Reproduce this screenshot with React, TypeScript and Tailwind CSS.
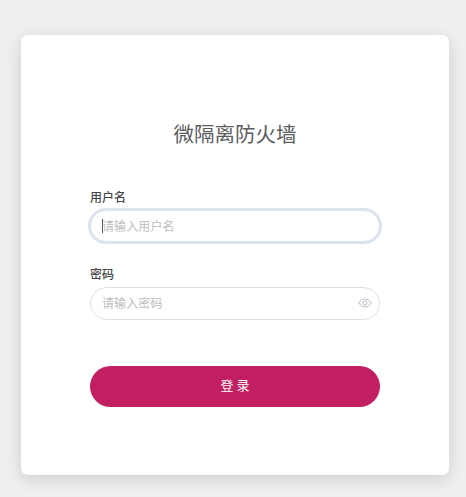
import { useState } from "react";

function EyeIcon() {
  return (
    <svg viewBox="0 0 14 10" className="h-[10px] w-[14px]" fill="none" stroke="#b9bac6" strokeWidth="1">
      <path d="M.7 5C2.300 2.400 4.400 1 7 1S11.700 2.400 13.300 5C11.700 7.600 9.600 9 7 9S2.300 7.600.7 5Z" />
      <circle cx="7" cy="5" r="2" />
    </svg>
  );
}

export default function App() {
  const [user, setUser] = useState("");
  const [password, setPassword] = useState("");
  const [visible, setVisible] = useState(false);

  return (
    <main className="h-[497px] w-[466px] overflow-hidden bg-[#f0eeef] pt-[35px] pl-[21px] font-['Noto_Sans_CJK_SC',sans-serif]">
      <form
        className="flex h-[440px] w-[428px] flex-col rounded-[7px] bg-white px-[69px] pt-[83px] shadow-[0_4px_16px_rgba(0,0,0,0.14)]"
        onSubmit={(e) => e.preventDefault()}
      >
        <h1 className="h-[30px] text-center text-[20.5px] leading-[30px] font-normal whitespace-nowrap text-[#5b5c60]">
          微隔离防火墙
        </h1>

        <label htmlFor="user" className="mt-[39px] h-5 text-[12px] leading-5 font-medium text-[#45464a]">
          用户名
        </label>
        <div className="mt-[3px] flex h-[32px] items-center rounded-full border border-[#dbe4ee] bg-white pl-[11px] ring-2 ring-[#dbe4ee]">
          <span className="h-[14px] w-px bg-[#555]" />
          <input
            id="user"
            value={user}
            onChange={(e) => setUser(e.target.value)}
            placeholder="请输入用户名"
            className="-ml-px h-full min-w-0 flex-1 bg-transparent pb-[2px] text-[12px] tracking-[0.1px] text-[#444] outline-none placeholder:text-[#bdbdbd]"
          />
        </div>

        <label htmlFor="password" className="mt-[22px] h-5 text-[12px] leading-5 font-medium text-[#45464a]">
          密码
        </label>
        <div className="mt-[3px] flex h-[33px] items-center rounded-full border border-[#dedfe3] bg-white pr-[7px] pl-[11px]">
          <input
            id="password"
            type={visible ? "text" : "password"}
            value={password}
            onChange={(e) => setPassword(e.target.value)}
            placeholder="请输入密码"
            className="h-full min-w-0 flex-1 bg-transparent pb-[3px] text-[12px] tracking-[0.1px] text-[#444] outline-none placeholder:text-[#bdbdbd]"
          />
          <button type="button" aria-label="显示密码" className="pb-[2px]" onClick={() => setVisible(!visible)}>
            <EyeIcon />
          </button>
        </div>

        <button
          type="submit"
          className="mt-[46px] h-[41px] rounded-full bg-[#c11f62] pb-[4px] pl-[3px] text-[13px] font-normal tracking-[3px] text-white"
        >
          登录
        </button>
      </form>
    </main>
  );
}
